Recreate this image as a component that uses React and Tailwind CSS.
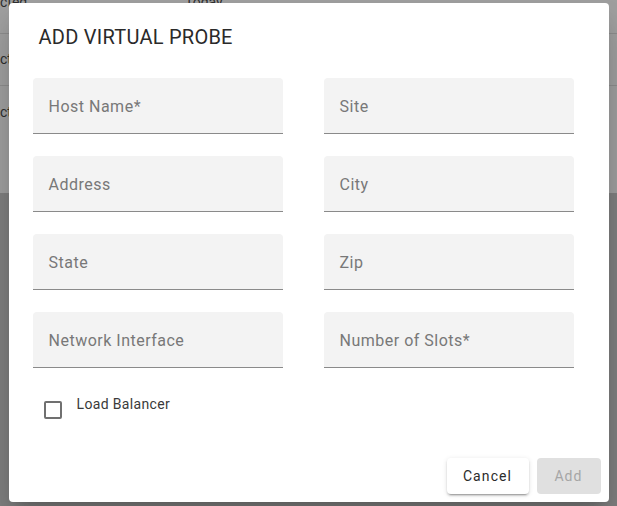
import { useState } from "react";

const fields = [
    ["Host Name*", "Site"],
    ["Address", "City"],
    ["State", "Zip"],
    ["Network Interface", "Number of Slots*"],
];

const FilledField = ({ label }) => (
    <div className="h-[56px] w-[250px] rounded-t-[4px] bg-[#f3f3f3] border-b border-[#8a8a8a] flex items-center px-4 pt-[2px]">
        <span className="text-[16px] tracking-[0.5px] text-[#787878]">{label}</span>
    </div>
);

const App = () => {
    const [checked, setChecked] = useState(false);

    return (
        <div className="relative h-[506px] w-[617px] overflow-hidden font-['Roboto',sans-serif]">
            {/* page behind the dialog, already dimmed by the backdrop */}
            <div className="flex flex-col h-full">
                <div className="h-[193px] bg-[#9f9f9f] flex flex-col text-[14px] text-[#2e2e2e]">
                    <div className="h-[34px] border-b border-[#8d8d8d] flex items-start">
                        <span className="-ml-[40px] -mt-[8px] w-[120px]">Connected</span>
                        <span className="ml-[105px] -mt-[8px]">Today</span>
                    </div>
                    <div className="h-[52px] border-b border-[#8d8d8d] flex items-center">
                        <span className="-ml-[40px]">Connected</span>
                    </div>
                    <div className="h-[52px] flex items-center">
                        <span className="-ml-[40px]">Connected</span>
                    </div>
                </div>
                <div className="flex-1 bg-[#7f7f7f]" />
            </div>

            <div className="absolute inset-0 flex items-start justify-center pt-[3px]">
                <div className="w-[600px] h-[499px] bg-white rounded-[4px] shadow-[0_11px_15px_-7px_rgba(0,0,0,0.2),0_24px_38px_3px_rgba(0,0,0,0.14)] flex flex-col">
                    <h2 className="pl-[30px] pt-[22px] text-[20px] leading-[24px] text-[#2a2a2a] tracking-[0.25px]">
                        ADD VIRTUAL PROBE
                    </h2>

                    <div className="mt-[29px] pl-[24px] flex flex-col gap-[22px]">
                        {fields.map(([a, b]) => (
                            <div key={a} className="flex gap-[41px]">
                                <FilledField label={a} />
                                <FilledField label={b} />
                            </div>
                        ))}
                    </div>

                    <label className="mt-[26px] ml-[35px] flex items-start gap-[15px] cursor-pointer">
                        <span
                            className="mt-[7px] w-[18px] h-[18px] border-2 border-[#707070] rounded-[2px] bg-white"
                            onClick={() => setChecked(!checked)}
                        />
                        <span className="text-[14px] leading-[20px] text-[#3a3a3a] tracking-[0.35px]">Load Balancer</span>
                    </label>

                    <div className="mt-auto flex justify-end gap-[8px] p-[8px]">
                        <button className="h-[36px] w-[82px] rounded-[4px] bg-white text-[14px] tracking-[1.1px] text-[#2b2b2b] shadow-[0_3px_1px_-2px_rgba(0,0,0,0.2),0_2px_2px_0_rgba(0,0,0,0.14),0_1px_5px_0_rgba(0,0,0,0.12)]">
                            Cancel
                        </button>
                        <button disabled className="h-[36px] w-[64px] rounded-[4px] bg-[#e0e0e0] text-[14px] tracking-[1.1px] text-[#a6a6a6]">
                            Add
                        </button>
                    </div>
                </div>
            </div>
        </div>
    );
};

export default App;
